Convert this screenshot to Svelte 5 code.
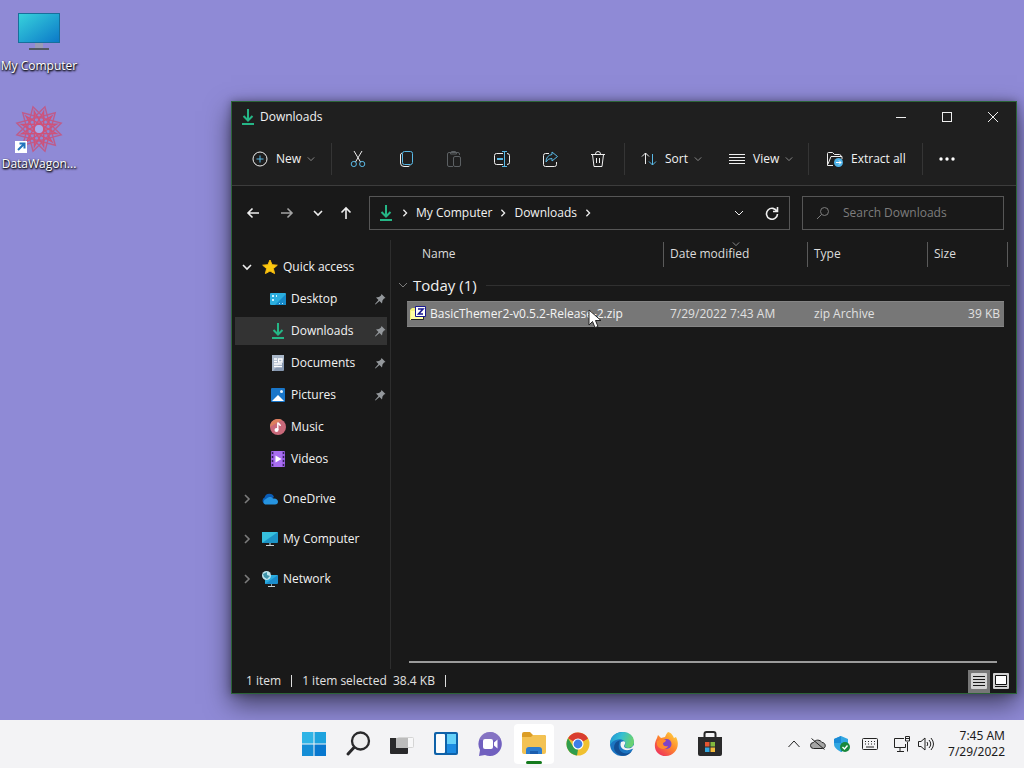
<script lang="ts">
  const files = [
    {
      name: "BasicThemer2-v0.5.2-Release-2.zip",
      modified: "7/29/2022 7:43 AM",
      type: "zip Archive",
      size: "39 KB",
    },
  ];

  const pinned = [
    { name: "Desktop", icon: "desktop", pin: true },
    { name: "Downloads", icon: "download", pin: true },
    { name: "Documents", icon: "document", pin: true },
    { name: "Pictures", icon: "picture", pin: true },
    { name: "Music", icon: "music", pin: false },
    { name: "Videos", icon: "video", pin: false },
  ];
  const roots = [
    { name: "OneDrive", icon: "onedrive" },
    { name: "My Computer", icon: "computer" },
    { name: "Network", icon: "network" },
  ];
  const tools = ["Cut", "Copy", "Paste", "Rename", "Share", "Delete"];
  const apps = [
    "Start",
    "Search",
    "Task view",
    "Widgets",
    "Chat",
    "File Explorer",
    "Chrome",
    "Edge",
    "Firefox",
    "Store",
  ];

  let current = $state("Downloads");
  let query = $state("");
  let view = $state("details");

  // outline of a {12/step} star polygon
  function star(step: number, r: number): string {
    const gcd = (a: number, b: number): number => (b ? gcd(b, a % b) : a);
    const loops = gcd(12, step);
    let d = "";
    for (let l = 0; l < loops; l++) {
      for (let i = 0; i < 12 / loops; i++) {
        const a = ((l + i * step) * Math.PI) / 6 + 0.26;
        d += `${i ? "L" : "M"}${(24 + r * Math.cos(a)).toFixed(1)} ${(24 + r * Math.sin(a)).toFixed(1)}`;
      }
      d += "Z";
    }
    return d;
  }
</script>

{#snippet chevron(dir: string, size = 10)}
  <svg class="chev {dir}" width={size} height={size} viewBox="0 0 10 10" aria-hidden="true">
    <path d="M1 3l4 4 4-4" />
  </svg>
{/snippet}

{#snippet downloadIcon(size = 16)}
  <svg width={size} height={size} viewBox="0 0 16 16" fill="none" stroke="#25b686" stroke-width="2" aria-hidden="true">
    <path d="M8 0v11M3.500 7L8 11.500 12.500 7" /><path d="M2 15h12" />
  </svg>
{/snippet}

{#snippet placeIcon(name: string)}
  {#if name === "download"}
    {@render downloadIcon()}
  {:else}
    <svg width="16" height="16" viewBox="0 0 16 16" aria-hidden="true">
      {#if name === "desktop"}
        <rect y="2" width="16" height="12" rx="1" fill="#2baede" />
        <path d="M16 3v10l-1 1H5z" fill="#1689c9" />
        <path d="M2 4h2v2H2zM2 8h2v2H2zM6 4h1v2H6z" fill="#c9f2ff" />
        <path d="M9 12h1v1H9zM12 12h1v1h-1z" fill="#b3e6fb" />
      {:else if name === "document"}
        <rect x="2" width="12" height="16" rx="1" fill="#8798b0" />
        <path d="M2 0h12v4L3 16H2z" fill="#a9b7c8" />
        <path d="M4 4h3M4 6.500h3M4 9h8M4 11.500h8M8.500 4H12v3H8.500z" stroke="#fff" stroke-width="1.300" fill="none" />
      {:else if name === "picture"}
        <rect x="1" y="1" width="14" height="14" rx="1" fill="#1976c9" />
        <path d="M2 14l6-6 6 6z" fill="#fff" />
        <circle cx="11.500" cy="4.500" r="1.500" fill="#e6f5ff" />
      {:else if name === "music"}
        <circle cx="8" cy="8" r="8" fill="#c9697a" />
        <path d="M0 8a8 8 0 0 1 12-7z" fill="#dc7f5d" />
        <circle cx="6.500" cy="11" r="2" fill="#fff" />
        <path d="M7.800 11V3.500c.5 1.500 2.500 1.500 2.500 3.500" stroke="#fff" stroke-width="1.400" fill="none" />
      {:else if name === "video"}
        <rect x="1" width="14" height="16" rx="1" fill="#9a5fe4" />
        <path d="M4 0h8v16H4z" fill="#a86df0" />
        <path d="M2.500 1v14M13.500 1v14" stroke="#35215c" stroke-width="1.500" stroke-dasharray="2 2" />
        <path d="M5.500 4.500l6 3.500-6 3.500z" fill="#fff" />
      {:else if name === "onedrive"}
        <path d="M3 13a3.500 3.500 0 0 1-.5-6.500A5 5 0 0 1 12 6z" fill="#0a5cb5" />
        <path d="M3 13.500A3 3 0 0 1 4 8c3-3 6-2 7-.5 3-.5 5 1 5 3a3 3 0 0 1-3 3z" fill="#2694e0" />
      {:else if name === "computer"}
        <rect y="1" width="16" height="11" rx="1" fill="#1c93c6" />
        <path d="M0 12V1h16z" fill="#36c0dd" />
        <path d="M7 12h2v2H7z" fill="#6d858e" /><path d="M4 14.500h8" stroke="#c7d0d4" />
      {:else if name === "network"}
        <rect x="3" y="4" width="13" height="9" rx="1" fill="#1b8dcd" />
        <path d="M3 13V4h13z" fill="#2bacdf" />
        <path d="M9 13h1v2H9z" fill="#91a4ad" /><path d="M6 15.500h7" stroke="#c7d0d4" />
        <circle cx="4.500" cy="4.500" r="4.500" fill="#bde5ee" />
        <path d="M1 3l4-2v3l3 1-3 3-3-2z" fill="#3e93a9" />
      {/if}
    </svg>
  {/if}
{/snippet}

{#snippet toolIcon(name: string)}
  <svg class="line" width="18" height="18" viewBox="0 0 18 18" aria-hidden="true">
    {#if name === "Cut"}
      <path d="M5 1l6.500 11M13 1L6.500 12" />
      <g class="accent"><circle cx="4.800" cy="14" r="2.600" /><circle cx="13.200" cy="14" r="2.600" /></g>
    {:else if name === "Copy"}
      <path d="M5 3q-1.500.5-1.500 2V13q0 3.500 3.500 3.500h4q1.500 0 2-1" />
      <rect class="accent" x="5.500" y="1.500" width="10" height="13" rx="2" />
    {:else if name === "Paste"}
      <g class="dim">
        <path d="M8 16.500H4q-1.500 0-1.500-1.500V4q0-1.500 1.500-1.500h9Q14.500 2.500 14.500 4v1" />
        <path d="M5.500 4q0-2.500 1.500-2.500h3q1.500 0 1.500 2.500z" />
        <rect x="8.500" y="6.500" width="7" height="10" rx="1.500" />
      </g>
    {:else if name === "Rename"}
      <path d="M10 3.500H3.500q-2 0-2 2v7q0 2 2 2H10M14 3.500q2.500 0 2.500 2v7q0 2-2.500 2" />
      <path class="accent" d="M11.500 1.500v15M9 1.500h5M9 16.500h5" /><path class="accent" d="M4 9h6" stroke-width="2" />
    {:else if name === "Share"}
      <path d="M8 3.500H4.500q-2 0-2 2v9q0 2 2 2h9q2 0 2-2V12" />
      <path class="accent" d="M11 2l5.500 4.500L11 11V8.500Q7 8 5 12q0-6.500 6-7.500z" />
    {:else if name === "Delete"}
      <path d="M2 4.500h14M6.500 4q0-2.500 2.500-2.500T11.500 4M3.500 4.500l1.500 12h8l1.500-12M7.500 8v5M10.500 8v5" />
    {/if}
  </svg>
{/snippet}

{#snippet appIcon(name: string)}
  <svg width="26" height="26" viewBox="0 0 26 26" aria-hidden="true">
    {#if name === "Start"}
      <path d="M1 1h11.500v11.500H1z" fill="#2fb4e6" /><path d="M13.500 1H25v11.500H13.500z" fill="#1ea3de" />
      <path d="M1 13.500h11.500V25H1z" fill="#158ed6" /><path d="M13.500 13.500H25V25H13.500z" fill="#0878cf" />
    {:else if name === "Search"}
      <circle cx="15.500" cy="10" r="8.500" fill="#eeeeef" stroke="#29292b" stroke-width="2.300" />
      <path d="M9 16.500L3 23" stroke="#29292b" stroke-width="3" stroke-linecap="round" />
    {:else if name === "Task view"}
      <rect x="8.500" y="6.500" width="16" height="10" rx="1" fill="#f7f7f8" stroke="#d5d5d5" />
      <path d="M1 7h18v15q0 1-1 1H2q-1 0-1-1z" fill="#29292b" />
      <path d="M7 7h12v10H7z" fill="#bcbcbc" />
    {:else if name === "Widgets"}
      <rect x="1" y="1" width="24" height="23" rx="2" fill="#0f62a9" />
      <rect x="3" y="3" width="9" height="19" rx="1" fill="#fbfcfd" />
      <path d="M14 3h9v10h-9z" fill="#65d1f9" />
      <path d="M14 13h9v9h-9z" fill="#1b8be2" />
    {:else if name === "Chat"}
      <path d="M13 1a12 12 0 1 1-5 23l-6 1 1-6A12 12 0 0 1 13 1z" fill="#7160bf" />
      <path d="M13 1A12 12 0 0 0 2 9h22A12 12 0 0 0 13 1z" fill="#8e7cc4" opacity=".7" />
      <rect x="6" y="8" width="10" height="10" rx="2" fill="#fff" />
      <path d="M17 11.500l3.500-3v9l-3.500-3z" fill="#fff" />
    {:else if name === "File Explorer"}
      <path d="M1 3q0-2 2-2h6l3 3h11q2 0 2 2v4H1z" fill="#dc9d25" />
      <path d="M1 6h9l2-2h11q2 0 2 2v15q0 2-2 2H3q-2 0-2-2z" fill="#f3c253" />
      <path d="M5 23v-4q0-3 3-3h10q3 0 3 3v4z" fill="#2d7ccd" />
      <path d="M9 20h8v3H9z" fill="#1b5dae" />
    {:else if name === "Chrome"}
      <circle cx="13" cy="13" r="11.500" fill="#f0c02f" />
      <path d="M13 13L3 7.300A11.500 11.500 0 0 1 23 7.500z" fill="#d93d30" />
      <path d="M13 13l10-5.500H13z" fill="#d93d30" />
      <path d="M3 7.300L8.500 16l4.500 2.500-1 6A11.500 11.500 0 0 1 3 7.300z" fill="#2f9d4c" />
      <circle cx="13" cy="13" r="5.500" fill="#fff" /><circle cx="13" cy="13" r="4.400" fill="#3e7ee6" />
    {:else if name === "Edge"}
      <defs>
        <linearGradient id="edge-top" x1="0" y1="0" x2="1" y2="0.300">
          <stop offset="0" stop-color="#1d8fd4" /><stop offset=".5" stop-color="#34bfd3" /><stop offset="1" stop-color="#68d173" />
        </linearGradient>
      </defs>
      <circle cx="13" cy="13" r="12" fill="#1b75c2" />
      <path d="M1 12C2-2 25-3 25 11c0 6-6 7-9 5q-1-1 0-2c2-4-4-7-9-5q-4 1-6 5z" fill="url(#edge-top)" />
      <path d="M10 13c-2 9 8 12 13 7-5 8-17 5-18-3q0-7 7-8-2 1-2 4z" fill="#124f95" />
      <path d="M12 11c-2 5 2 9 8 8l6-2v-4l-4 4c-4 1-9 0-6-4q1-4-4-2z" fill="#f3f3f5" />
    {:else if name === "Firefox"}
      <defs>
        <linearGradient id="fox" x1="1" y1="0" x2="0.200" y2="1">
          <stop offset="0" stop-color="#ffdf45" /><stop offset=".5" stop-color="#ff8a2b" /><stop offset="1" stop-color="#ed2f5e" />
        </linearGradient>
      </defs>
      <path d="M15 1c4 1 5 4 6 6l2-1c5 9-1 19-10 19C3 25-1 16 4 7l1-3 3 3 4-1q1-3 3-5z" fill="url(#fox)" />
      <circle cx="13.500" cy="13" r="5" fill="#7f43c6" />
      <path d="M4 10q5-3 9-1 0 2-3 3 0 4 5 3c-1 4-9 4-11-1z" fill="#ff8a2e" />
    {:else if name === "Store"}
      <path d="M7.500 7V3q0-2 2-2h7q2 0 2 2v4" fill="none" stroke="#262627" stroke-width="2" />
      <path d="M1 6h24v17q0 2-2 2H3q-2 0-2-2z" fill="#2a2a2b" />
      <path d="M8 11h4.500v4.500H8z" fill="#e45632" /><path d="M13.500 11H18v4.500h-4.500z" fill="#82b93e" />
      <path d="M8 16.500h4.500V21H8z" fill="#32a7e0" /><path d="M13.500 16.500H18V21h-4.500z" fill="#f2b93b" />
    {/if}
  </svg>
{/snippet}

<div class="screen">
  <main class="desktop">
    <div class="shortcuts">
      <button class="shortcut">
        <svg width="48" height="48" viewBox="0 0 48 48" aria-hidden="true">
          <defs>
            <linearGradient id="screen" x1="0" y1="0" x2="1" y2="1">
              <stop offset="0" stop-color="#38d3dc" /><stop offset="1" stop-color="#0b78c8" />
            </linearGradient>
          </defs>
          <rect x="3.500" y="6.500" width="41" height="29" fill="url(#screen)" stroke="#176f9b" />
          <path d="M20 36h8v5h-8z" fill="#9a9bb5" />
          <path d="M14 42h20" stroke="#535962" stroke-width="2" />
        </svg>
        <span>My Computer</span>
      </button>
      <button class="shortcut">
        <svg width="48" height="48" viewBox="0 0 48 48" fill="none" stroke="#bd5c8c" stroke-width="1.400" aria-hidden="true">
          <path d={star(4, 23)} />
          <path d={star(5, 18)} stroke="#cf5279" />
          <circle cx="24" cy="24" r="4" fill="#a9aaea" stroke="none" />
          <path d="M0 36h12v12H0z" fill="#fff" stroke="none" />
          <path d="M3 45l6-6M4.500 38.500h5v5" stroke="#2374bd" stroke-width="2" />
        </svg>
        <span>DataWagon...</span>
      </button>
    </div>

    <section class="window" aria-label="Downloads">
      <header class="title-bar">
        {@render downloadIcon()}
        <h1>Downloads</h1>
        <button aria-label="Minimize"><svg class="line" width="12" height="12" viewBox="0 0 12 12"><path d="M1 6.500h10" /></svg></button>
        <button aria-label="Maximize"><svg class="line" width="12" height="12" viewBox="0 0 12 12"><rect x="1.500" y="1.500" width="9" height="9" /></svg></button>
        <button aria-label="Close"><svg class="line" width="12" height="12" viewBox="0 0 12 12"><path d="M1 1l10 10M11 1L1 11" /></svg></button>
      </header>

      <div class="toolbar">
        <button class="command new">
          <svg class="line" width="16" height="16" viewBox="0 0 16 16" aria-hidden="true">
            <circle cx="8" cy="8" r="7" /><path class="accent" d="M8 4.500v7M4.500 8h7" />
          </svg>
          New {@render chevron("down soft", 8)}
        </button>
        <div class="tools">
          {#each tools as tool}
            <button aria-label={tool} disabled={tool === "Paste"}>{@render toolIcon(tool)}</button>
          {/each}
        </div>
        <button class="command sort">
          <svg class="line" width="16" height="16" viewBox="0 0 16 16" aria-hidden="true">
            <path d="M4.500 13V2M1 5.500L4.500 2 8 5.500" /><path class="accent" d="M11.500 3v11M8 10.500l3.500 3.500 3.500-3.500" />
          </svg>
          Sort {@render chevron("down soft", 8)}
        </button>
        <button class="command view">
          <svg class="line" width="16" height="16" viewBox="0 0 16 16" aria-hidden="true">
            <path d="M0 3.500h16M0 6.500h16M0 9.500h16M0 12.500h16" />
          </svg>
          View {@render chevron("down soft", 8)}
        </button>
        <button class="command extract">
          <svg class="line" width="16" height="16" viewBox="0 0 16 16" aria-hidden="true">
            <path d="M6 14.500H.5v-12q0-1 1-1h4l2 2h5q1.500 0 1.500 2M1 13l3-7.500h11V8" />
            <circle cx="11.500" cy="11.500" r="4.500" fill="#4fb3e8" stroke="none" />
            <path d="M9 11.500h5M12 9.500l2 2-2 2" stroke="#fff" />
          </svg>
          Extract all
        </button>
        <button class="more" aria-label="See more">
          <svg width="18" height="4" viewBox="0 0 18 4" fill="#fff"><circle cx="3" cy="2" r="1.700" /><circle cx="9" cy="2" r="1.700" /><circle cx="15" cy="2" r="1.700" /></svg>
        </button>
      </div>

      <nav class="address-row" aria-label="Address">
        <button class="step" aria-label="Back"><svg class="bold" width="14" height="14" viewBox="0 0 14 14"><path d="M13 7H2M6.500 2.500L2 7l4.500 4.500" /></svg></button>
        <button class="step dimmed" aria-label="Forward"><svg class="bold" width="14" height="14" viewBox="0 0 14 14"><path d="M1 7h11M7.500 2.500L12 7l-4.500 4.500" /></svg></button>
        <button class="small" aria-label="Recent locations">{@render chevron("down heavy")}</button>
        <button class="small" aria-label="Up"><svg class="bold" width="14" height="14" viewBox="0 0 14 14"><path d="M7 13V2M2.500 6.500L7 2l4.500 4.500" /></svg></button>
        <div class="address">
          {@render downloadIcon()}
          {@render chevron("right heavy", 8)}
          <a href="#computer">My Computer</a>
          {@render chevron("right heavy", 8)}
          <a href="#downloads">Downloads</a>
          {@render chevron("right heavy", 8)}
          <span class="spacer"></span>
          <button aria-label="Previous locations">{@render chevron("down")}</button>
          <button aria-label="Refresh">
            <svg class="line thick" width="14" height="14" viewBox="0 0 14 14"><path d="M12 5.500A5.500 5.500 0 1 0 12.500 8M12.500 1v4.500H8" /></svg>
          </button>
        </div>
        <label class="search">
          <svg width="14" height="14" viewBox="0 0 14 14" fill="none" stroke="#7d7d7d" aria-hidden="true">
            <circle cx="8.500" cy="5.500" r="4" /><path d="M5.500 8.500L1 13" />
          </svg>
          <input type="text" placeholder="Search Downloads" aria-label="Search Downloads" bind:value={query} />
        </label>
      </nav>

      <div class="panes">
        <aside>
          <button class="place root">
            {@render chevron("down heavy")}
            <svg width="16" height="16" viewBox="0 0 16 16" aria-hidden="true"><path d="M8 1l2.100 4.700 5.200.5-3.900 3.400 1.200 5L8 12l-4.600 2.600 1.200-5L.7 6.200l5.200-.5z" fill="#fbc910" stroke="#f7b90d" stroke-linejoin="round" /></svg>
            Quick access
          </button>
          {#each pinned as place}
            <button class="place child" class:current={current === place.name} onclick={() => (current = place.name)}>
              {@render placeIcon(place.icon)}
              {place.name}
              {#if place.pin}
                <svg class="pin" width="12" height="12" viewBox="0 0 12 12" aria-hidden="true"><path d="M7.500 1L11.500 5 10 5.500 8.500 7.500 8 10.500 5.500 8 1.500 11.500 1 11l3.500-4L2 4.500 5 4l2-1.500z" fill="#94989c" /></svg>
              {/if}
            </button>
          {/each}
          {#each roots as place}
            <button class="place root spaced">
              {@render chevron("right heavy faded")}
              {@render placeIcon(place.icon)}
              {place.name}
            </button>
          {/each}
        </aside>

        <div class="content">
          <table>
            <thead>
              <tr>
                <th>Name</th>
                <th>Date modified<span class="sorted">{@render chevron("down soft", 8)}</span></th>
                <th>Type</th>
                <th>Size</th>
              </tr>
            </thead>
            <tbody>
              <tr class="group">
                <th>{@render chevron("down faded")}Today (1)</th>
              </tr>
              {#each files as file}
                <tr class="file">
                  <td>
                    <svg width="16" height="16" viewBox="0 0 16 16" aria-hidden="true">
                      <path d="M0 4l2-2h5v12H0z" fill="#f4f47d" /><path d="M1 5h12v8H1z" fill="#ffffa3" />
                      <path d="M1 13.500h12.500V11" stroke="#252525" fill="none" />
                      <path d="M5.500.5h10v10h-10z" fill="#fff" stroke="#17178f" />
                      <path d="M8 3h5L8.500 8H13" fill="none" stroke="#17178f" stroke-width="1.600" />
                    </svg>
                    {file.name}
                  </td>
                  <td>{file.modified}</td>
                  <td>{file.type}</td>
                  <td>{file.size}</td>
                </tr>
              {/each}
            </tbody>
          </table>
          <div class="scrollbar"></div>
        </div>
      </div>

      <footer>
        <span>1 item</span>
        <span class="selection">1 item selected&nbsp; 38.4 KB</span>
        <button class:active={view === "details"} aria-label="Details" onclick={() => (view = "details")}>
          <svg width="16" height="16" viewBox="0 0 16 16"><rect width="16" height="16" rx="1" fill="#d2d2d2" /><path d="M2 3.500h12M2 6.500h12M2 9.500h12M2 12.500h12" stroke="#171717" /></svg>
        </button>
        <button class:active={view === "icons"} aria-label="Large icons" onclick={() => (view = "icons")}>
          <svg width="16" height="16" viewBox="0 0 16 16"><rect width="16" height="16" rx="1" fill="#d2d2d2" /><path d="M2.500 2.500h11v9h-11z" fill="#fff" stroke="#111" /><path d="M2 13.500h12" stroke="#111" /></svg>
        </button>
      </footer>
    </section>

    <svg class="cursor" width="14" height="20" viewBox="0 0 14 20" aria-hidden="true">
      <path d="M1 1v15l3.500-3.500 2.500 6 3-1-2.500-6H13z" fill="#fff" stroke="#222" />
    </svg>
  </main>

  <div class="taskbar">
    <div class="apps">
      {#each apps as app}
        <button class:open={app === "File Explorer"} aria-label={app}>{@render appIcon(app)}</button>
      {/each}
    </div>
    <div class="tray">
      <button aria-label="Show hidden icons"><svg width="14" height="14" viewBox="0 0 14 14"><path d="M1.500 10L7 4l5.500 6" /></svg></button>
      <button aria-label="OneDrive">
        <svg width="16" height="16" viewBox="0 0 16 16"><path d="M3.500 12.500a3 3 0 0 1 0-6 5 5 0 0 1 8.500 0c4 0 4.500 6 .5 6z" fill="#a5a5a5" /><path d="M1.500 2.500l13 11" /></svg>
      </button>
      <button class="shield" aria-label="Security">
        <svg width="16" height="16" viewBox="0 0 16 16">
          <path d="M7 0l7 3v5c0 4-4 6-7 8-3-2-7-4-7-8V3z" fill="#32a7e2" /><path d="M7 0v7H0V3zM7 7h7c0 5-4 7-7 9z" fill="#1b8bd6" />
          <circle cx="11" cy="11" r="5" fill="#18883c" /><path d="M8.500 11l2 2 3-3.500" stroke="#fff" stroke-width="1.400" />
        </svg>
      </button>
      <button class="keyboard" aria-label="Touch keyboard">
        <svg width="16" height="16" viewBox="0 0 16 16"><rect x=".5" y="2.500" width="15" height="11" rx="1" /><path d="M3 5.500h10M3 8h10" stroke-dasharray="1 2" /><path d="M4 11h8" /></svg>
      </button>
      <button aria-label="Network">
        <svg width="16" height="16" viewBox="0 0 16 16"><path d="M10 2.500H.5v9h11V8M6 12v3M3 15.500h7M13.500 6v9.500M11.500.5h4v4.500h-4zM11.500 2.500h4" /></svg>
      </button>
      <button aria-label="Volume">
        <svg width="16" height="16" viewBox="0 0 16 16"><path d="M.5 5.500v5H3l4 3.500V2L3 5.500zM9 6q1.500 2 0 4M11 4q3.500 4 0 8M13 2q5 6 0 12" /></svg>
      </button>
      <button class="clock"><time datetime="2022-07-29T07:45">7:45 AM<br />7/29/2022</time></button>
    </div>
  </div>
</div>

<style>
  :global(body) {
    margin: 0;
  }
  .screen {
    display: grid;
    grid-template-rows: 1fr 48px;
    height: 100vh;
    overflow: hidden;
    font: 12px/16px "Open Sans", "Noto Sans", sans-serif;
    color: #f2f2f2;
  }
  button,
  input {
    font: inherit;
    color: inherit;
    background: none;
    border: 0;
    padding: 0;
    margin: 0;
  }
  button {
    display: flex;
    align-items: center;
    justify-content: center;
  }
  a {
    color: inherit;
    text-decoration: none;
  }
  svg {
    flex: none;
  }

  .line,
  .bold,
  .chev {
    fill: none;
    stroke: #eee;
  }
  .bold,
  .thick,
  .heavy {
    stroke-width: 1.6;
  }
  .accent {
    stroke: #59b9e6;
  }
  .dim {
    stroke: #5c6063;
  }
  .soft {
    stroke: #a5a5a5;
  }
  .faded {
    stroke: #7c7c7c;
  }
  .right {
    transform: rotate(-90deg);
  }

  .desktop {
    position: relative;
    background: #8f8ad6;
    overflow: hidden;
  }
  .shortcuts {
    display: flex;
    flex-direction: column;
    gap: 26px;
    width: 78px;
    padding-top: 7px;
  }
  .shortcut {
    flex-direction: column;
    gap: 3px;
    height: 72px;
    justify-content: flex-start;
    color: #fff;
    text-shadow: 1px 1px 2px #000, 0 1px 2px #000;
  }

  .window {
    position: absolute;
    inset: 101px 7px 26px 231px;
    display: flex;
    flex-direction: column;
    background: #191919;
    border: 1px solid #2b6338;
    box-shadow: 0 10px 24px rgba(0, 0, 0, 0.55), 0 0 8px rgba(0, 0, 0, 0.3);
  }
  .title-bar {
    display: flex;
    align-items: center;
    height: 30px;
    padding-left: 8px;
    background: #1f1f1f;
  }
  .title-bar h1 {
    flex: 1;
    margin: 0 0 0 4px;
    font-size: 12px;
    font-weight: 400;
  }
  .title-bar button {
    width: 46px;
    height: 30px;
  }

  .toolbar {
    display: flex;
    align-items: center;
    height: 54px;
    box-sizing: border-box;
    padding-top: 1px;
    background: #1f1f1f;
    border-bottom: 1px solid #3c3c3c;
    font-weight: 500;
  }
  .toolbar button {
    height: 32px;
    box-sizing: border-box;
  }
  .command {
    gap: 8px;
    justify-content: flex-start;
    white-space: nowrap;
  }
  .command .chev {
    margin-left: -2px;
  }
  .new {
    width: 100px;
    padding-left: 20px;
    border-right: 1px solid #353535;
  }
  .tools {
    display: flex;
    padding: 0 2px;
    border-right: 1px solid #353535;
  }
  .tools button {
    width: 48px;
  }
  .sort {
    width: 88px;
    padding-left: 16px;
  }
  .view {
    width: 96px;
    padding-left: 16px;
    border-right: 1px solid #353535;
  }
  .extract {
    width: 114px;
    padding-left: 18px;
    border-right: 1px solid #353535;
  }
  .more {
    width: 48px;
  }

  .address-row {
    display: flex;
    align-items: center;
    height: 54px;
    padding: 0 12px 0 4px;
  }
  .step {
    width: 34px;
    height: 32px;
  }
  .dimmed {
    opacity: 0.65;
  }
  .small {
    width: 28px;
    height: 32px;
  }
  .address,
  .search {
    display: flex;
    align-items: center;
    height: 34px;
    box-sizing: border-box;
    border: 1px solid #565656;
  }
  .address {
    flex: 1;
    gap: 7px;
    margin: 0 12px 0 9px;
    padding: 0 9px 0 8px;
    white-space: nowrap;
  }
  .address .spacer {
    flex: 1;
  }
  .address button {
    width: 16px;
    height: 32px;
    margin-left: 10px;
  }
  .search {
    width: 202px;
    padding-left: 13px;
    gap: 13px;
  }
  .search input {
    flex: 1;
    min-width: 0;
    outline: 0;
  }
  .search input::placeholder {
    color: #7d7d7d;
    opacity: 1;
  }

  .panes {
    flex: 1;
    display: flex;
    min-height: 0;
  }
  aside {
    width: 159px;
    box-sizing: border-box;
    padding: 11px 3px 0;
    border-right: 1px solid #2d2d2d;
  }
  .place {
    width: 100%;
    height: 28px;
    margin: 2px 0 4px;
    justify-content: flex-start;
    gap: 5px;
    white-space: nowrap;
  }
  .root {
    padding-left: 7px;
  }
  .root .chev {
    margin-right: 5px;
  }
  .root.spaced {
    margin-top: 12px;
  }
  .child {
    padding: 0 1px 0 35px;
  }
  .current {
    background: #333;
  }
  .pin {
    margin-left: auto;
  }

  .content {
    flex: 1;
    display: flex;
    flex-direction: column;
    justify-content: space-between;
    min-width: 0;
  }
  table,
  thead,
  tbody {
    display: block;
  }
  tr {
    display: grid;
    grid-template-columns: 1fr 144px 120px 80px;
    margin: 0 8px 0 16px;
  }
  th {
    position: relative;
    height: 25px;
    margin-top: 2px;
    padding: 0 0 0 6px;
    border-right: 1px solid #5a5a5a;
    font-weight: 400;
    line-height: 24px;
    text-align: left;
    color: #dcdcdc;
  }
  thead th:first-child {
    padding-left: 15px;
  }
  .sorted {
    position: absolute;
    left: 0;
    right: 0;
    top: -2px;
    display: flex;
    justify-content: center;
  }
  .group {
    display: flex;
    margin: 3px 6px 3px 7px;
  }
  .group th {
    display: flex;
    flex: 1;
    align-items: center;
    gap: 5px;
    height: 26px;
    padding: 0;
    border: 0;
    font-size: 15px;
    color: #f0f0f0;
  }
  .group th::after {
    content: "";
    flex: 1;
    height: 1px;
    margin-left: 4px;
    background: #303030;
  }
  .file {
    grid-template-columns: 1fr 144px 120px 76px;
    margin-right: 12px;
    height: 26px;
    box-sizing: border-box;
    background: #777;
    border: 1px solid #858585;
    border-width: 1px 0;
    line-height: 24px;
  }
  td {
    padding: 0 0 0 6px;
    white-space: nowrap;
    color: #e0e0e0;
  }
  td:first-child {
    display: flex;
    align-items: center;
    gap: 4px;
    padding-left: 3px;
    color: #f4f4f4;
  }
  td:last-child {
    padding-right: 4px;
    text-align: right;
  }
  .scrollbar {
    height: 2px;
    margin: 0 19px 6px 18px;
    background: #9b9b9b;
  }

  footer {
    display: flex;
    align-items: center;
    height: 24px;
    padding: 0 4px 0 14px;
    color: #e2e2e2;
  }
  footer span {
    padding-right: 10px;
    margin-right: 10px;
    line-height: 12px;
    border-right: 1px solid #ddd;
  }
  footer .selection {
    margin-right: auto;
  }
  footer button {
    width: 22px;
    height: 23px;
  }
  footer .active {
    background: #777;
  }

  .cursor {
    position: absolute;
    left: 588px;
    top: 309px;
  }

  .taskbar {
    display: grid;
    grid-template-columns: 1fr auto 1fr;
    align-items: center;
    background: #f3f3f5;
    color: #1b1b1b;
  }
  .apps {
    grid-column: 2;
    display: flex;
    gap: 4px;
    padding: 0 2px;
  }
  .apps button {
    position: relative;
    width: 40px;
    height: 40px;
    border-radius: 4px;
  }
  .apps .open {
    background: #fff;
  }
  .open::after {
    content: "";
    position: absolute;
    left: 12px;
    right: 12px;
    bottom: 0;
    height: 3px;
    border-radius: 2px;
    background: #157a1e;
  }
  .tray {
    display: flex;
    justify-content: flex-end;
    padding-right: 19px;
  }
  .tray button {
    width: 24px;
    height: 32px;
  }
  .tray svg {
    fill: none;
    stroke: #222;
  }
  .tray .shield svg {
    stroke: none;
  }
  .tray .keyboard {
    width: 32px;
    margin-right: 4px;
  }
  .tray .clock {
    width: 67px;
    justify-content: flex-end;
    text-align: right;
    font-family: "Noto Sans", "Open Sans", sans-serif;
  }
</style>
